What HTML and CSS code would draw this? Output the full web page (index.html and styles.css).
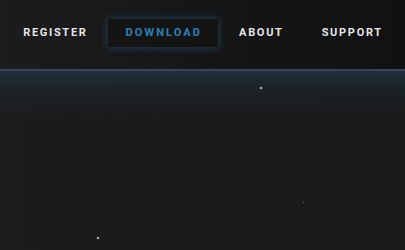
FILE: index.html
```html
<!DOCTYPE html>
<html>
<head>
<meta charset="utf-8">
<link rel="stylesheet" href="styles.css">
</head>
<body>
<header class="topbar">
  <nav class="nav">
    <a class="nav-item">REGISTER</a>
    <a class="nav-item active">DOWNLOAD</a>
    <a class="nav-item">ABOUT</a>
    <a class="nav-item">SUPPORT</a>
  </nav>
</header>
<main class="stage">
  <span class="star s1"></span>
  <span class="star s2"></span>
  <span class="star s3"></span>
</main>
</body>
</html>
```
FILE: styles.css
```css
html, body {
  margin: 0;
  padding: 0;
  width: 405px;
  height: 250px;
  overflow: hidden;
  background: #1b1b1b;
  font-family: Roboto, "Liberation Sans", sans-serif;
}
.topbar {
  height: 69px;
  background: linear-gradient(90deg, #1c1c1c 0%, #161616 50%, #111111 100%);
  border-bottom: 2px solid #33495a;
  display: flex;
  align-items: center;
}
.nav {
  flex: 1;
  display: flex;
  justify-content: center;
  gap: 3px;
  margin-top: -4px;
}
.nav-item {
  display: block;
  padding: 8px 17px 8px 18px;
  font-size: 11px;
  font-weight: 700;
  letter-spacing: 1.7px;
  color: #e6e6e6;
  line-height: 12px;
}
.nav-item.active {
  color: #2a82bd;
  background: #141414;
  box-shadow: 0 0 7px 1px rgba(40, 110, 160, 0.45);
  letter-spacing: 2.1px;
  padding-right: 16px;
}
.stage {
  position: relative;
  height: 179px;
  background:
    linear-gradient(180deg, rgba(30, 50, 64, 0.85) 0%, rgba(28, 40, 48, 0.5) 12%, rgba(27, 27, 27, 0) 25%),
    linear-gradient(90deg, #1c1c1c 0%, #191919 100%);
}
.star {
  position: absolute;
  width: 2px;
  height: 2px;
  border-radius: 50%;
  background: #cfd6dc;
  box-shadow: 0 0 2px rgba(200, 210, 220, 0.5);
}
.s1 { left: 260px; top: 16px; }
.s2 { left: 303px; top: 131px; background: #666; width: 1px; height: 1px; }
.s3 { left: 97px; top: 166px; }
```
